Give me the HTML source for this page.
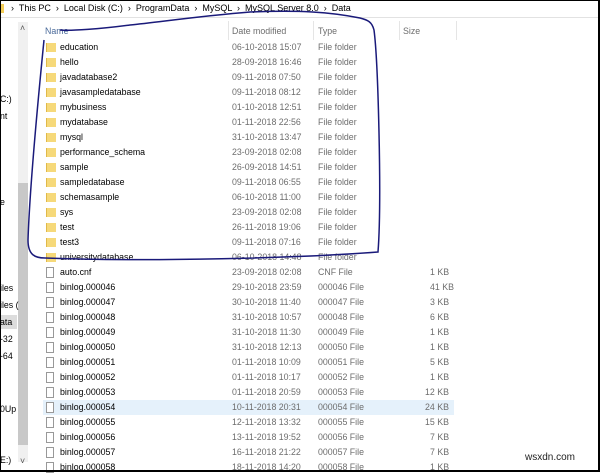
<!DOCTYPE html>
<html><head><style>
body{margin:0;width:600px;height:472px;overflow:hidden;background:#fff;font-family:"Liberation Sans",sans-serif;font-size:8.8px;color:#000;position:relative}
.a{position:absolute;white-space:nowrap}
.g{color:#6d6d6d}
.row{position:absolute;left:0;width:600px;height:15px}
.fold{position:absolute;left:46px;top:3px;width:9px;height:9px;background:#f6d97a;border-left:1px solid #e0b94a}
.file{position:absolute;left:46px;top:2px;width:8px;height:11px;border:1px solid #999;background:#fff;box-sizing:border-box}
</style></head><body>
<div class="a" style="left:0;top:0;width:600px;height:17px;border-bottom:1px solid #e2e2e2"></div>
<div class="a" style="left:0;top:4px;width:4px;height:9px;background:#f3cd57"></div>
<div class="a" style="left:11px;top:3px;font-size:9px">›&nbsp; This PC &nbsp;›&nbsp; Local Disk (C:) &nbsp;›&nbsp; ProgramData &nbsp;›&nbsp; MySQL &nbsp;›&nbsp; MySQL Server 8.0 &nbsp;›&nbsp; Data</div>
<div class="a" style="left:18px;top:22px;width:10px;height:440px;background:#f0f0f0"></div>
<div class="a" style="left:18px;top:183px;width:10px;height:262px;background:#c8c8c8"></div>
<div class="a" style="left:20px;top:23px;color:#555">&#708;</div>
<div class="a" style="left:20px;top:456px;color:#555">&#709;</div>
<div class="a" style="left:0;top:315px;width:17px;height:14px;background:#dcdcdc"></div>
<div class="a" style="left:0;top:94px">C:)</div>
<div class="a" style="left:0;top:111px">nt</div>
<div class="a" style="left:0;top:197px">e</div>
<div class="a" style="left:0;top:283px">iles</div>
<div class="a" style="left:0;top:300px">iles (</div>
<div class="a" style="left:0;top:317px">ata</div>
<div class="a" style="left:0;top:334px">-32</div>
<div class="a" style="left:0;top:351px">-64</div>
<div class="a" style="left:0;top:404px">0Up</div>
<div class="a" style="left:0;top:455px">E:)</div>
<div class="a" style="left:45px;top:26px;color:#4a6a9a">Name</div>
<div class="a g" style="left:232px;top:26px">Date modified</div>
<div class="a g" style="left:318px;top:26px">Type</div>
<div class="a g" style="left:403px;top:26px">Size</div>
<div class="a" style="left:228px;top:21px;width:1px;height:19px;background:#e5e5e5"></div>
<div class="a" style="left:313px;top:21px;width:1px;height:19px;background:#e5e5e5"></div>
<div class="a" style="left:399px;top:21px;width:1px;height:19px;background:#e5e5e5"></div>
<div class="a" style="left:456px;top:21px;width:1px;height:19px;background:#e5e5e5"></div>
<div class="a" style="left:43px;top:400px;width:411px;height:15px;background:#e5f1fb"></div>
<div class="row" style="top:40px"><div class="fold"></div><span class="a" style="left:60px;top:2px">education</span><span class="a g" style="left:232px;top:2px">06-10-2018 15:07</span><span class="a g" style="left:318px;top:2px">File folder</span></div>
<div class="row" style="top:55px"><div class="fold"></div><span class="a" style="left:60px;top:2px">hello</span><span class="a g" style="left:232px;top:2px">28-09-2018 16:46</span><span class="a g" style="left:318px;top:2px">File folder</span></div>
<div class="row" style="top:70px"><div class="fold"></div><span class="a" style="left:60px;top:2px">javadatabase2</span><span class="a g" style="left:232px;top:2px">09-11-2018 07:50</span><span class="a g" style="left:318px;top:2px">File folder</span></div>
<div class="row" style="top:85px"><div class="fold"></div><span class="a" style="left:60px;top:2px">javasampledatabase</span><span class="a g" style="left:232px;top:2px">09-11-2018 08:12</span><span class="a g" style="left:318px;top:2px">File folder</span></div>
<div class="row" style="top:100px"><div class="fold"></div><span class="a" style="left:60px;top:2px">mybusiness</span><span class="a g" style="left:232px;top:2px">01-10-2018 12:51</span><span class="a g" style="left:318px;top:2px">File folder</span></div>
<div class="row" style="top:115px"><div class="fold"></div><span class="a" style="left:60px;top:2px">mydatabase</span><span class="a g" style="left:232px;top:2px">01-11-2018 22:56</span><span class="a g" style="left:318px;top:2px">File folder</span></div>
<div class="row" style="top:130px"><div class="fold"></div><span class="a" style="left:60px;top:2px">mysql</span><span class="a g" style="left:232px;top:2px">31-10-2018 13:47</span><span class="a g" style="left:318px;top:2px">File folder</span></div>
<div class="row" style="top:145px"><div class="fold"></div><span class="a" style="left:60px;top:2px">performance_schema</span><span class="a g" style="left:232px;top:2px">23-09-2018 02:08</span><span class="a g" style="left:318px;top:2px">File folder</span></div>
<div class="row" style="top:160px"><div class="fold"></div><span class="a" style="left:60px;top:2px">sample</span><span class="a g" style="left:232px;top:2px">26-09-2018 14:51</span><span class="a g" style="left:318px;top:2px">File folder</span></div>
<div class="row" style="top:175px"><div class="fold"></div><span class="a" style="left:60px;top:2px">sampledatabase</span><span class="a g" style="left:232px;top:2px">09-11-2018 06:55</span><span class="a g" style="left:318px;top:2px">File folder</span></div>
<div class="row" style="top:190px"><div class="fold"></div><span class="a" style="left:60px;top:2px">schemasample</span><span class="a g" style="left:232px;top:2px">06-10-2018 11:00</span><span class="a g" style="left:318px;top:2px">File folder</span></div>
<div class="row" style="top:205px"><div class="fold"></div><span class="a" style="left:60px;top:2px">sys</span><span class="a g" style="left:232px;top:2px">23-09-2018 02:08</span><span class="a g" style="left:318px;top:2px">File folder</span></div>
<div class="row" style="top:220px"><div class="fold"></div><span class="a" style="left:60px;top:2px">test</span><span class="a g" style="left:232px;top:2px">26-11-2018 19:06</span><span class="a g" style="left:318px;top:2px">File folder</span></div>
<div class="row" style="top:235px"><div class="fold"></div><span class="a" style="left:60px;top:2px">test3</span><span class="a g" style="left:232px;top:2px">09-11-2018 07:16</span><span class="a g" style="left:318px;top:2px">File folder</span></div>
<div class="row" style="top:250px"><div class="fold"></div><span class="a" style="left:60px;top:2px">universitydatabase</span><span class="a g" style="left:232px;top:2px">06-10-2018 14:48</span><span class="a g" style="left:318px;top:2px">File folder</span></div>
<div class="row" style="top:265px"><div class="file"></div><span class="a" style="left:60px;top:2px">auto.cnf</span><span class="a g" style="left:232px;top:2px">23-09-2018 02:08</span><span class="a g" style="left:318px;top:2px">CNF File</span><span class="a g" style="left:430px;top:2px">1 KB</span></div>
<div class="row" style="top:280px"><div class="file"></div><span class="a" style="left:60px;top:2px">binlog.000046</span><span class="a g" style="left:232px;top:2px">29-10-2018 23:59</span><span class="a g" style="left:318px;top:2px">000046 File</span><span class="a g" style="left:430px;top:2px">41 KB</span></div>
<div class="row" style="top:295px"><div class="file"></div><span class="a" style="left:60px;top:2px">binlog.000047</span><span class="a g" style="left:232px;top:2px">30-10-2018 11:40</span><span class="a g" style="left:318px;top:2px">000047 File</span><span class="a g" style="left:430px;top:2px">3 KB</span></div>
<div class="row" style="top:310px"><div class="file"></div><span class="a" style="left:60px;top:2px">binlog.000048</span><span class="a g" style="left:232px;top:2px">31-10-2018 10:57</span><span class="a g" style="left:318px;top:2px">000048 File</span><span class="a g" style="left:430px;top:2px">6 KB</span></div>
<div class="row" style="top:325px"><div class="file"></div><span class="a" style="left:60px;top:2px">binlog.000049</span><span class="a g" style="left:232px;top:2px">31-10-2018 11:30</span><span class="a g" style="left:318px;top:2px">000049 File</span><span class="a g" style="left:430px;top:2px">1 KB</span></div>
<div class="row" style="top:340px"><div class="file"></div><span class="a" style="left:60px;top:2px">binlog.000050</span><span class="a g" style="left:232px;top:2px">31-10-2018 12:13</span><span class="a g" style="left:318px;top:2px">000050 File</span><span class="a g" style="left:430px;top:2px">1 KB</span></div>
<div class="row" style="top:355px"><div class="file"></div><span class="a" style="left:60px;top:2px">binlog.000051</span><span class="a g" style="left:232px;top:2px">01-11-2018 10:09</span><span class="a g" style="left:318px;top:2px">000051 File</span><span class="a g" style="left:430px;top:2px">5 KB</span></div>
<div class="row" style="top:370px"><div class="file"></div><span class="a" style="left:60px;top:2px">binlog.000052</span><span class="a g" style="left:232px;top:2px">01-11-2018 10:17</span><span class="a g" style="left:318px;top:2px">000052 File</span><span class="a g" style="left:430px;top:2px">1 KB</span></div>
<div class="row" style="top:385px"><div class="file"></div><span class="a" style="left:60px;top:2px">binlog.000053</span><span class="a g" style="left:232px;top:2px">01-11-2018 20:59</span><span class="a g" style="left:318px;top:2px">000053 File</span><span class="a g" style="left:425px;top:2px">12 KB</span></div>
<div class="row" style="top:400px"><div class="file"></div><span class="a" style="left:60px;top:2px">binlog.000054</span><span class="a g" style="left:232px;top:2px">10-11-2018 20:31</span><span class="a g" style="left:318px;top:2px">000054 File</span><span class="a g" style="left:425px;top:2px">24 KB</span></div>
<div class="row" style="top:415px"><div class="file"></div><span class="a" style="left:60px;top:2px">binlog.000055</span><span class="a g" style="left:232px;top:2px">12-11-2018 13:32</span><span class="a g" style="left:318px;top:2px">000055 File</span><span class="a g" style="left:425px;top:2px">15 KB</span></div>
<div class="row" style="top:430px"><div class="file"></div><span class="a" style="left:60px;top:2px">binlog.000056</span><span class="a g" style="left:232px;top:2px">13-11-2018 19:52</span><span class="a g" style="left:318px;top:2px">000056 File</span><span class="a g" style="left:430px;top:2px">7 KB</span></div>
<div class="row" style="top:445px"><div class="file"></div><span class="a" style="left:60px;top:2px">binlog.000057</span><span class="a g" style="left:232px;top:2px">16-11-2018 21:22</span><span class="a g" style="left:318px;top:2px">000057 File</span><span class="a g" style="left:430px;top:2px">7 KB</span></div>
<div class="row" style="top:460px"><div class="file"></div><span class="a" style="left:60px;top:2px">binlog.000058</span><span class="a g" style="left:232px;top:2px">18-11-2018 14:20</span><span class="a g" style="left:318px;top:2px">000058 File</span><span class="a g" style="left:430px;top:2px">1 KB</span></div>
<div class="a" style="left:525px;top:452px;font-size:10px;color:#222">wsxdn.com</div>
<svg class="a" style="left:0;top:0" width="600" height="472"><path d="M44,40 C40,80 30,180 28,240 C28,255 35,258 45,258 C150,262 300,258 378,252 C382,200 378,60 374,30 C372,22 368,20 360,18 C330,12 300,10 250,12 C200,16 160,22 130,25 C100,29 70,31 60,30" fill="none" stroke="#1a1a7a" stroke-width="1.5"/></svg>
<div class="a" style="left:0;top:0;width:600px;height:472px;box-sizing:border-box;border:1px solid #000;border-right-width:2px;border-bottom-width:2px"></div>
</body></html>
